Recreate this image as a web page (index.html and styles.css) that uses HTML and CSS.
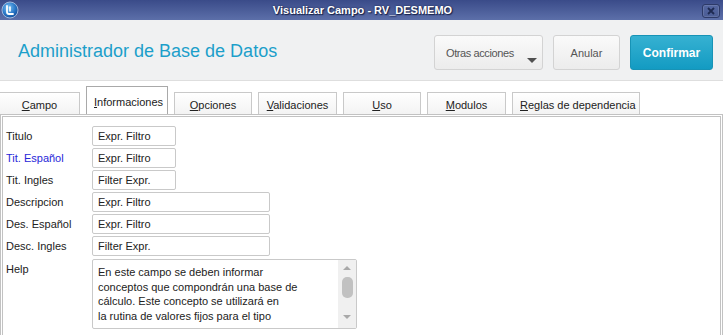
FILE: index.html
```html
<!DOCTYPE html>
<html lang="es">
<head>
<meta charset="utf-8">
<title>Visualizar Campo - RV_DESMEMO</title>
<link rel="stylesheet" href="styles.css">
</head>
<body>
<div class="window">
  <div class="titlebar">
    <svg class="logo" width="18" height="18" viewBox="0 0 18 18">
      <defs>
        <radialGradient id="lg" cx="0.4" cy="0.35" r="0.7">
          <stop offset="0" stop-color="#7cc3f5"/>
          <stop offset="0.6" stop-color="#2a78c8"/>
          <stop offset="1" stop-color="#134a96"/>
        </radialGradient>
      </defs>
      <circle cx="9" cy="9" r="8" fill="url(#lg)" stroke="#9fb7dc" stroke-width="1"/>
      <path d="M6 5 V11 Q6 13 8 13 H12" fill="none" stroke="#fff" stroke-width="1.8" stroke-linecap="round"/>
      <path d="M9 6 V10" fill="none" stroke="#fff" stroke-width="1.6" stroke-linecap="round"/>
    </svg>
    <span class="title">Visualizar Campo - RV_DESMEMO</span>
    <div class="close">
      <svg width="8" height="8" viewBox="0 0 8 8"><path d="M1 1 L7 7 M7 1 L1 7" stroke="#1e2a52" stroke-width="1.8"/></svg>
    </div>
  </div>

  <div class="header">
    <h1 class="app-title">Administrador de Base de Datos</h1>
    <div class="actions">
      <button class="btn btn-more">Otras acciones<span class="caret"></span></button>
      <button class="btn btn-cancel">Anular</button>
      <button class="btn btn-primary">Confirmar</button>
    </div>
  </div>

  <div class="tabs">
    <div class="tab tab-first"><u>C</u>ampo</div>
    <div class="tab tab-active"><u>I</u>nformaciones</div>
    <div class="tab"><u>O</u>pciones</div>
    <div class="tab tab-w79"><u>V</u>alidaciones</div>
    <div class="tab"><u>U</u>so</div>
    <div class="tab tab-w79"><u>M</u>odulos</div>
    <div class="tab tab-wide"><u>R</u>eglas de dependencia</div>
  </div>

  <div class="panel">
    <div class="form">
      <div class="label">Titulo</div>
      <div class="field field-short">Expr. Filtro</div>

      <div class="label label-blue">Tit. Español</div>
      <div class="field field-short">Expr. Filtro</div>

      <div class="label">Tit. Ingles</div>
      <div class="field field-short">Filter Expr.</div>

      <div class="label">Descripcion</div>
      <div class="field field-long">Expr. Filtro</div>

      <div class="label">Des. Español</div>
      <div class="field field-long">Expr. Filtro</div>

      <div class="label">Desc. Ingles</div>
      <div class="field field-long">Filter Expr.</div>

      <div class="label label-help">Help</div>
      <div class="memo">
        <div class="memo-text">En este campo se deben informar<br>conceptos que compondrán una base de<br>cálculo. Este concepto se utilizará en<br>la rutina de valores fijos para el tipo</div>
        <div class="scrollbar">
          <span class="arrow-up"></span>
          <span class="thumb"></span>
          <span class="arrow-down"></span>
        </div>
      </div>
    </div>
  </div>
</div>
</body>
</html>
```

FILE: styles.css
```css
html, body {
  margin: 0;
  padding: 0;
}
body {
  width: 723px;
  height: 335px;
  overflow: hidden;
  background: #ffffff;
  font-family: "Liberation Sans", Arial, sans-serif;
  font-size: 11px;
  color: #222;
}
.window {
  width: 723px;
}

/* Title bar */
.titlebar {
  height: 20px;
  background: linear-gradient(#3a4b89, #5c6fa9);
  display: grid;
  grid-template-columns: 1fr auto 1fr;
  align-items: center;
}
.logo {
  display: block;
  margin-left: 1px;
}
.title {
  color: #ffffff;
  font-weight: bold;
  font-size: 11px;
  line-height: 20px;
  text-shadow: 0 0 2px #18224a, 1px 1px 1px #18224a;
  padding-left: 2px;
}
.close {
  justify-self: end;
  margin-right: 3px;
  margin-top: 1px;
  width: 16px;
  height: 12px;
  border: 1px solid #2d3a68;
  border-radius: 3px;
  background: linear-gradient(#5466a0, #4b5d96);
  display: flex;
  align-items: center;
  justify-content: center;
  box-shadow: inset 0 0 0 1px rgba(255,255,255,0.12);
}
.close svg {
  display: block;
}

/* Header */
.header {
  box-sizing: border-box;
  height: 61px;
  background: #f0f1f2;
  border-bottom: 1px solid #dedede;
  display: flex;
  align-items: flex-start;
  justify-content: space-between;
  padding: 15px 10px 0 18px;
}
.app-title {
  margin: 6px 0 0 0;
  font-size: 18px;
  line-height: 20px;
  font-weight: normal;
  color: #1c9fca;
}
.actions {
  display: flex;
  gap: 10px;
}
.btn {
  position: relative;
  height: 35px;
  border: 1px solid #d3d3d3;
  border-radius: 3px;
  background: linear-gradient(#fafafa, #ececec);
  font-family: "Liberation Sans", Arial, sans-serif;
  font-size: 11px;
  color: #555;
  padding: 0;
  margin: 0;
  display: flex;
  align-items: center;
  justify-content: center;
}
.btn-more {
  width: 109px;
  justify-content: flex-start;
  padding-left: 11px;
  letter-spacing: -0.4px;
}
.caret {
  position: absolute;
  right: 5px;
  bottom: 6px;
  width: 0;
  height: 0;
  border-left: 5px solid transparent;
  border-right: 5px solid transparent;
  border-top: 5px solid #505050;
}
.btn-cancel {
  width: 67px;
}
.btn-primary {
  width: 83px;
  background: linear-gradient(#36b1d2, #139bc2);
  border-color: #1793b6;
  color: #ffffff;
  font-weight: bold;
  font-size: 12px;
}

/* Tabs */
.tabs {
  height: 33px;
  display: flex;
  align-items: flex-end;
  gap: 6px;
}
.tab {
  box-sizing: border-box;
  width: 78px;
  height: 22px;
  border: 1px solid #c9c9c9;
  border-bottom: none;
  background: linear-gradient(#ffffff, #f3f3f3);
  text-align: center;
  line-height: 13px;
  padding-top: 6px;
  color: #222;
  white-space: nowrap;
}
.tab u {
  text-decoration: underline;
  text-underline-offset: 1px;
}
.tab-first {
  width: 81px;
  margin-left: -1px;
}
.tab-w79 {
  width: 79px;
}
.tab-active {
  width: 82px;
  height: 28px;
  padding-top: 9px;
  padding-left: 7px;
  border-color: #a9a9a9;
  background: #ffffff;
  text-align: left;
}
.tab-wide {
  width: 128px;
  padding-left: 7px;
  text-align: left;
}

/* Panel */
.panel {
  box-sizing: border-box;
  height: 221px;
  border: 3px double #c2c2c2;
  border-bottom: none;
  padding: 9px 0 0 3px;
}
.form {
  display: grid;
  grid-template-columns: 86px auto;
  row-gap: 2px;
  justify-items: start;
}
.label {
  line-height: 20px;
  color: #222;
}
.label-blue {
  color: #2727d8;
}
.label-help {
  margin-top: 1px;
}
.field {
  box-sizing: border-box;
  height: 20px;
  line-height: 18px;
  border: 1px solid #c9c9c9;
  border-radius: 2px;
  padding: 0 5px;
  background: #ffffff;
  color: #222;
}
.field-short {
  width: 84px;
}
.field-long {
  width: 178px;
}
.memo {
  margin-top: 1px;
  box-sizing: border-box;
  width: 265px;
  height: 70px;
  border: 1px solid #c9c9c9;
  border-radius: 2px;
  display: flex;
  overflow: hidden;
}
.memo-text {
  flex: 1;
  padding: 5px 0 0 5px;
  line-height: 14.7px;
  color: #222;
  overflow: hidden;
  white-space: nowrap;
}
.scrollbar {
  width: 18px;
  background: #f0f0f0;
  display: flex;
  flex-direction: column;
  align-items: center;
}
.arrow-up {
  margin-top: 6px;
  width: 0;
  height: 0;
  border-left: 4px solid transparent;
  border-right: 4px solid transparent;
  border-bottom: 4px solid #a9a9a9;
}
.thumb {
  margin-top: 7px;
  width: 11px;
  height: 21px;
  border-radius: 5px;
  background: #c1c1c1;
}
.arrow-down {
  margin-top: 17px;
  width: 0;
  height: 0;
  border-left: 4px solid transparent;
  border-right: 4px solid transparent;
  border-top: 4px solid #a9a9a9;
}
```
